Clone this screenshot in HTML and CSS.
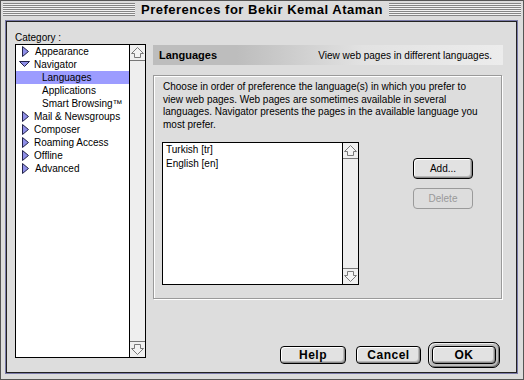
FILE: index.html
```html
<html>
	<head>
		<meta charset="utf-8">
		<title>Preferences for Bekir Kemal Ataman</title>
		<link rel="stylesheet" href="styles.css">
	</head>
	<body>
		<div class="window">
			<div class="titlebar">
				<div class="stripes"></div>
				<div class="title">Preferences for Bekir Kemal Ataman</div>
				<div class="stripes"></div>
			</div>
			<div class="content">
				<div class="sidebar">
					<div class="cat-label">Category :</div>
					<div class="listbox cat-list">
						<ul class="cat-items">
							<li class="cat"><svg class="tri" width="13" height="11" viewBox="0 0 13 11"><polygon points="5.5,0.5 11.5,5.5 5.5,10.5" fill="#8f8fe8" stroke="#22224a"/></svg><span class="gap1">Appearance</span></li>
							<li class="cat"><svg class="tri" width="13" height="11" viewBox="0 0 13 11"><polygon points="2.5,2.5 12.5,2.5 7.5,7.5" fill="#8f8fe8" stroke="#22224a"/></svg>Navigator</li>
							<li class="sub selected">Languages</li>
							<li class="sub">Applications</li>
							<li class="sub">Smart Browsing™</li>
							<li class="cat"><svg class="tri" width="13" height="11" viewBox="0 0 13 11"><polygon points="5.5,0.5 11.5,5.5 5.5,10.5" fill="#8f8fe8" stroke="#22224a"/></svg>Mail &amp; Newsgroups</li>
							<li class="cat"><svg class="tri" width="13" height="11" viewBox="0 0 13 11"><polygon points="5.5,0.5 11.5,5.5 5.5,10.5" fill="#8f8fe8" stroke="#22224a"/></svg>Composer</li>
							<li class="cat"><svg class="tri" width="13" height="11" viewBox="0 0 13 11"><polygon points="5.5,0.5 11.5,5.5 5.5,10.5" fill="#8f8fe8" stroke="#22224a"/></svg>Roaming Access</li>
							<li class="cat"><svg class="tri" width="13" height="11" viewBox="0 0 13 11"><polygon points="5.5,0.5 11.5,5.5 5.5,10.5" fill="#8f8fe8" stroke="#22224a"/></svg>Offline</li>
							<li class="cat"><svg class="tri" width="13" height="11" viewBox="0 0 13 11"><polygon points="5.5,0.5 11.5,5.5 5.5,10.5" fill="#8f8fe8" stroke="#22224a"/></svg><span class="gap1">Advanced</span></li>
						</ul>
						<div class="scrollbar">
							<div class="arrow up"><svg width="15" height="15" viewBox="0 0 15 15"><polygon points="7.5,2.5 13.5,8.5 10.5,8.5 10.5,12.5 4.5,12.5 4.5,8.5 1.5,8.5" fill="#f4f4f4" stroke="#7a7a7a"/></svg></div>
							<div class="track"></div>
							<div class="arrow down"><svg width="15" height="15" viewBox="0 0 15 15"><polygon points="7.5,12.5 13.5,6.5 10.5,6.5 10.5,2.5 4.5,2.5 4.5,6.5 1.5,6.5" fill="#f4f4f4" stroke="#7a7a7a"/></svg></div>
						</div>
					</div>
				</div>

				<div class="main">
					<div class="panel-head">
						<span class="head-title">Languages</span>
						<span class="head-desc">View web pages in different languages.</span>
					</div>
					<div class="group">
						<p class="intro">Choose in order of preference the language(s) in which you prefer to<br>view web pages. Web pages are sometimes available in several<br>languages. Navigator presents the pages in the available language you<br>most prefer.</p>
						<div class="lang-row">
							<div class="listbox lang-list">
								<ul class="lang-items">
									<li>Turkish [tr]</li>
									<li>English [en]</li>
								</ul>
								<div class="scrollbar">
									<div class="arrow up"><svg width="15" height="15" viewBox="0 0 15 15"><polygon points="7.5,2.5 13.5,8.5 10.5,8.5 10.5,12.5 4.5,12.5 4.5,8.5 1.5,8.5" fill="#f4f4f4" stroke="#7a7a7a"/></svg></div>
									<div class="track"></div>
									<div class="arrow down"><svg width="15" height="15" viewBox="0 0 15 15"><polygon points="7.5,12.5 13.5,6.5 10.5,6.5 10.5,2.5 4.5,2.5 4.5,6.5 1.5,6.5" fill="#f4f4f4" stroke="#7a7a7a"/></svg></div>
								</div>
							</div>
							<div class="side-buttons">
								<button class="btn small">Add...</button>
								<button class="btn small disabled">Delete</button>
							</div>
						</div>
					</div>
					<div class="footer">
						<button class="btn big help">Help</button>
						<button class="btn big cancel">Cancel</button>
						<div class="default-ring"><button class="btn big ok">OK</button></div>
					</div>
				</div>
			</div>
		</div>
	</body>
</html>
```

FILE: styles.css
```css
body {
	margin: 0;
	font-family: "Liberation Sans", Arial, sans-serif;
	font-size: 10px;
	color: #000;
	background: #fff;
}
.window {
	width: 524px;
	height: 380px;
	box-sizing: border-box;
	border: 1px solid #555;
	background: #dcdcdc;
	display: flex;
	flex-direction: column;
}
.titlebar {
	height: 20px;
	display: flex;
	padding: 2px 2px 0 2px;
	box-sizing: border-box;
}
.stripes {
	flex: 1;
	height: 13px;
	background: repeating-linear-gradient(to bottom, #858585 0, #858585 1px, #f2f2f2 1px, #f2f2f2 2px);
}
.title {
	font-weight: bold;
	font-size: 13px;
	letter-spacing: 0.5px;
	line-height: 14px;
	padding: 0 6px;
}
.content {
	margin: 0 6px 0 5px;
	height: 352px;
	box-sizing: border-box;
	border: 1px solid #222;
	box-shadow: 0 0 0 1px #7a7aa8;
	background: #dddddd;
	display: flex;
}

/* category column */
.sidebar {
	padding-left: 8px;
}
.cat-label {
	height: 22px;
	padding-top: 10px;
	box-sizing: border-box;
	line-height: 12px;
}
.listbox {
	border: 1px solid #000;
	background: #fff;
	display: flex;
	box-sizing: border-box;
}
.cat-list {
	width: 131px;
	height: 314px;
}
.cat-items, .lang-items {
	flex: 1;
	list-style: none;
	margin: 0;
	padding: 0;
}
.cat-items li {
	height: 13px;
	line-height: 13px;
	white-space: nowrap;
	display: flex;
	align-items: center;
}
.cat {
	padding-left: 1px;
}
.tri {
	margin-right: 4px;
	flex: none;
}
.gap1 {
	margin-left: 1px;
}
.sub {
	padding-left: 26px;
}
.selected {
	background: #9c9cff;
}
.scrollbar {
	width: 15px;
	border-left: 1px solid #000;
	background: #eeeeee;
	display: flex;
	flex-direction: column;
}
.arrow {
	height: 15px;
	background: #f0f0f0;
}
.arrow svg {
	display: block;
}
.arrow.up {
	border-bottom: 1px solid #777;
}
.arrow.down {
	border-top: 1px solid #777;
}
.track {
	flex: 1;
}

/* right panel */
.main {
	width: 350px;
	margin-left: 7px;
	display: flex;
	flex-direction: column;
}
.panel-head {
	margin-top: 23px;
	height: 20px;
	display: flex;
	align-items: center;
	justify-content: space-between;
	padding: 0 11px 0 6px;
	background: linear-gradient(to right, #bdbdbd 0%, #bdbdbd 24%, #e2e2e2 60%, #ececec 100%);
}
.head-title {
	font-weight: bold;
	font-size: 11px;
}
.group {
	margin-top: 10px;
	width: 349px;
	height: 224px;
	box-sizing: border-box;
	border: 1px solid #9a9a9a;
	box-shadow: 1px 1px 0 #fff, inset 1px 1px 0 #fff;
	padding: 5px 0 0 8px;
}
.intro {
	margin: 0 0 0 1px;
	line-height: 12.5px;
	white-space: nowrap;
}
.lang-row {
	display: flex;
	margin-top: 11px;
}
.lang-list {
	width: 197px;
	height: 143px;
}
.lang-items {
	padding-left: 3px;
}
.lang-items li {
	height: 14px;
	line-height: 14px;
}
.side-buttons {
	margin-left: 54px;
	padding-top: 16px;
	display: flex;
	flex-direction: column;
	gap: 9px;
}

/* buttons */
.btn {
	font-family: "Liberation Sans", Arial, sans-serif;
	color: #000;
	border: 1px solid #000;
	border-radius: 4px;
	background: #e2e2e2;
	box-shadow: inset 1px 1px 0 #fff, inset -1px -1px 0 #8a8a8a, inset -2px -2px 0 #b8b8b8;
	padding: 0;
	margin: 0;
}
.btn.small {
	width: 60px;
	height: 21px;
	font-size: 10px;
}
.btn.disabled {
	border-color: #9a9a9a;
	color: #999;
	background: #dddddd;
	box-shadow: none;
}
.footer {
	margin-top: 43px;
	height: 26px;
	display: flex;
	justify-content: flex-end;
	align-items: center;
	padding-right: 3px;
}
.btn.big {
	height: 18px;
	font-size: 12px;
	font-weight: bold;
	letter-spacing: 0.5px;
}
.help {
	width: 66px;
	margin-right: 10px;
}
.cancel {
	width: 65px;
	margin-right: 7px;
}
.default-ring {
	border: 1px solid #000;
	border-radius: 7px;
	background: #bdbdbd;
	box-shadow: inset 1px 1px 0 #eee, inset -1px -1px 0 #777;
	padding: 3px;
	display: flex;
}
.ok {
	width: 64px;
}
```
